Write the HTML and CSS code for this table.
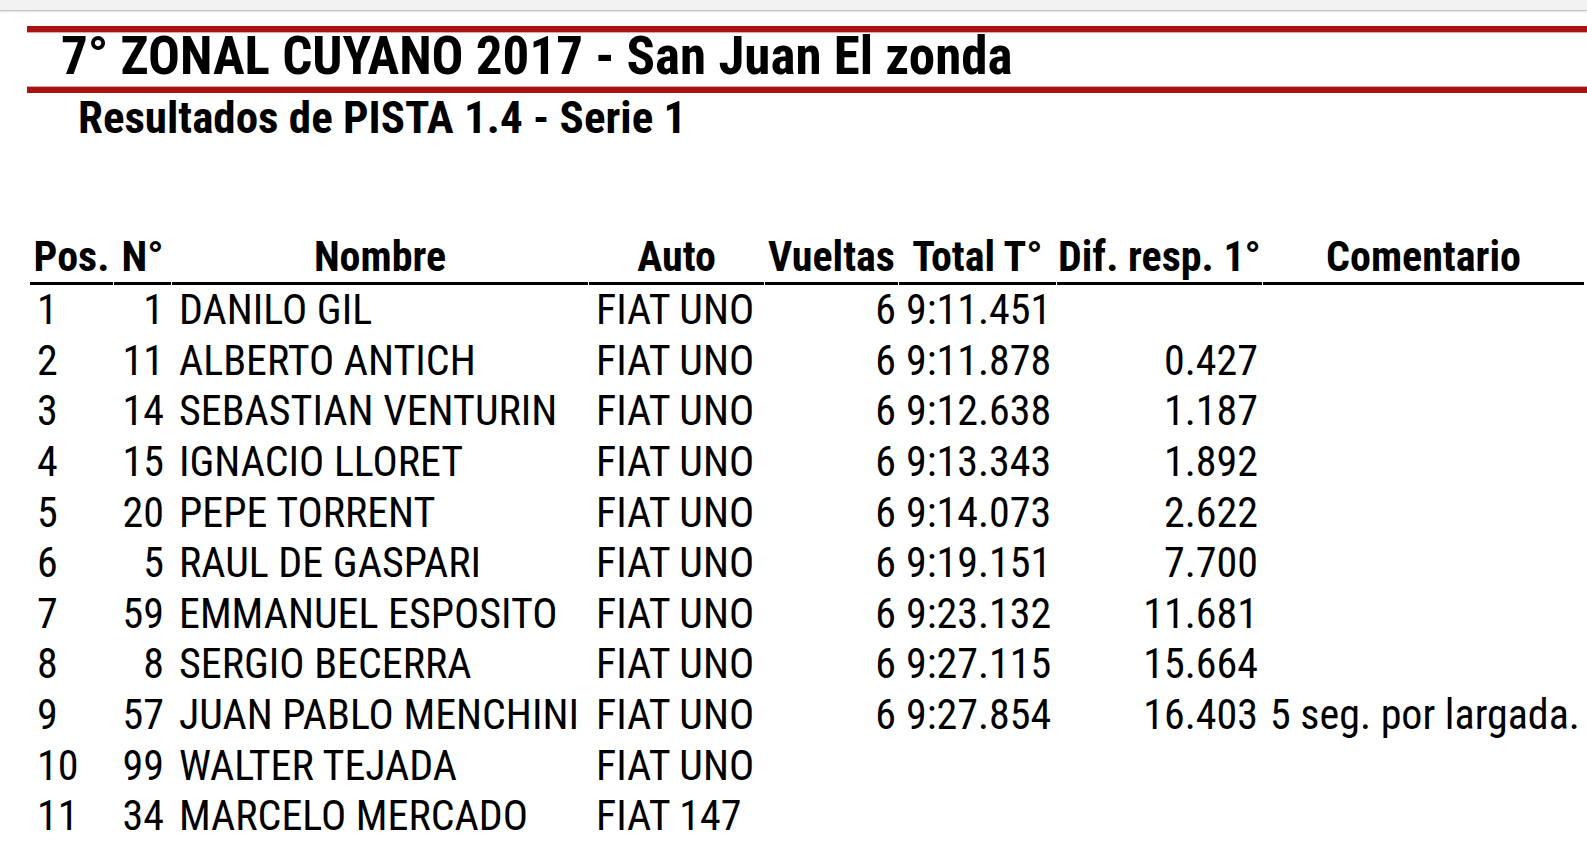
FILE: index.html
```html
<!DOCTYPE html>
<html lang="es">
<head>
<meta charset="utf-8">
<title>7° ZONAL CUYANO 2017 - San Juan El zonda</title>
<link rel="stylesheet" href="styles.css">
</head>
<body>
<div class="topbar"></div>
<header class="banner">
  <div class="rule rule-top"></div>
  <h1 class="title">7° ZONAL CUYANO 2017 - San Juan El zonda</h1>
  <div class="rule rule-bottom"></div>
</header>
<h2 class="subtitle">Resultados de PISTA 1.4 - Serie 1</h2>
<table class="results">
  <colgroup>
    <col class="c-pos"><col class="c-num"><col class="c-name"><col class="c-car">
    <col class="c-laps"><col class="c-total"><col class="c-dif"><col class="c-com">
  </colgroup>
  <thead>
    <tr><th>Pos.</th><th>N°</th><th>Nombre</th><th>Auto</th><th>Vueltas</th><th>Total T°</th><th>Dif. resp. 1°</th><th>Comentario</th></tr>
  </thead>
  <tbody>
    <tr><td class="l">1</td><td class="r">1</td><td class="l">DANILO GIL</td><td class="l">FIAT UNO</td><td class="r laps">6</td><td class="l">9:11.451</td><td class="r dif"></td><td class="l"></td></tr>
    <tr><td class="l">2</td><td class="r">11</td><td class="l">ALBERTO ANTICH</td><td class="l">FIAT UNO</td><td class="r laps">6</td><td class="l">9:11.878</td><td class="r dif">0.427</td><td class="l"></td></tr>
    <tr><td class="l">3</td><td class="r">14</td><td class="l">SEBASTIAN VENTURIN</td><td class="l">FIAT UNO</td><td class="r laps">6</td><td class="l">9:12.638</td><td class="r dif">1.187</td><td class="l"></td></tr>
    <tr><td class="l">4</td><td class="r">15</td><td class="l">IGNACIO LLORET</td><td class="l">FIAT UNO</td><td class="r laps">6</td><td class="l">9:13.343</td><td class="r dif">1.892</td><td class="l"></td></tr>
    <tr><td class="l">5</td><td class="r">20</td><td class="l">PEPE TORRENT</td><td class="l">FIAT UNO</td><td class="r laps">6</td><td class="l">9:14.073</td><td class="r dif">2.622</td><td class="l"></td></tr>
    <tr><td class="l">6</td><td class="r">5</td><td class="l">RAUL DE GASPARI</td><td class="l">FIAT UNO</td><td class="r laps">6</td><td class="l">9:19.151</td><td class="r dif">7.700</td><td class="l"></td></tr>
    <tr><td class="l">7</td><td class="r">59</td><td class="l">EMMANUEL ESPOSITO</td><td class="l">FIAT UNO</td><td class="r laps">6</td><td class="l">9:23.132</td><td class="r dif">11.681</td><td class="l"></td></tr>
    <tr><td class="l">8</td><td class="r">8</td><td class="l">SERGIO BECERRA</td><td class="l">FIAT UNO</td><td class="r laps">6</td><td class="l">9:27.115</td><td class="r dif">15.664</td><td class="l"></td></tr>
    <tr><td class="l">9</td><td class="r">57</td><td class="l">JUAN PABLO MENCHINI</td><td class="l">FIAT UNO</td><td class="r laps">6</td><td class="l">9:27.854</td><td class="r dif">16.403</td><td class="l">5 seg. por largada.</td></tr>
    <tr><td class="l">10</td><td class="r">99</td><td class="l">WALTER TEJADA</td><td class="l">FIAT UNO</td><td class="r laps"></td><td class="l"></td><td class="r dif"></td><td class="l"></td></tr>
    <tr><td class="l">11</td><td class="r">34</td><td class="l">MARCELO MERCADO</td><td class="l">FIAT 147</td><td class="r laps"></td><td class="l"></td><td class="r dif"></td><td class="l"></td></tr>
  </tbody>
</table>
</body>
</html>
```
FILE: styles.css
```css
html, body {
  margin: 0;
  padding: 0;
  background: #ffffff;
  color: #000000;
  font-family: "Roboto Condensed", Roboto, "Liberation Sans", sans-serif;
  overflow: hidden;
}

.topbar {
  height: 10px;
  background: #f2f2f2;
  border-bottom: 1px solid #c4c4c4;
  box-shadow: 0 1px 2px rgba(0,0,0,0.12);
}

.banner {
  margin: 15px 0 0 27px;
}

.rule {
  height: 6px;
  background: #a81212;
}

.rule-top {
  border-bottom: 1px solid #e7a3a3;
}

.rule-bottom {
  border-top: 1px solid #e7a3a3;
}

.title {
  margin: 0;
  padding: 1px 0 7px 34px;
  height: 45px;
  line-height: 45px;
  font-size: 53px;
  font-weight: 700;
  white-space: nowrap;
}

.subtitle {
  margin: 1px 0 0 78px;
  font-size: 45px;
  line-height: 48px;
  font-weight: 700;
  white-space: nowrap;
}

.results {
  margin: 92px 0 0 29px;
  border-collapse: separate;
  border-spacing: 1px 0;
  table-layout: fixed;
  width: 1556px;
  font-size: 42px;
}

.c-pos { width: 83px; }
.c-num { width: 57px; }
.c-name { width: 416px; }
.c-car { width: 175px; }
.c-laps { width: 133px; }
.c-total { width: 157px; }
.c-dif { width: 205px; }
.c-com { width: 321px; }

.results th {
  font-size: 42px;
  font-weight: 700;
  line-height: 46px;
  padding: 0 0 2px;
  text-align: center;
  border-bottom: 3px solid #000000;
  white-space: nowrap;
}

.results td {
  height: 50.6px;
  line-height: 50px;
  padding: 0 7px;
  white-space: nowrap;
  overflow: visible;
}

.results td.l { text-align: left; }
.results td.r { text-align: right; }
.results td.laps { padding-right: 2px; }
.results td.dif { padding-right: 4px; }
```
